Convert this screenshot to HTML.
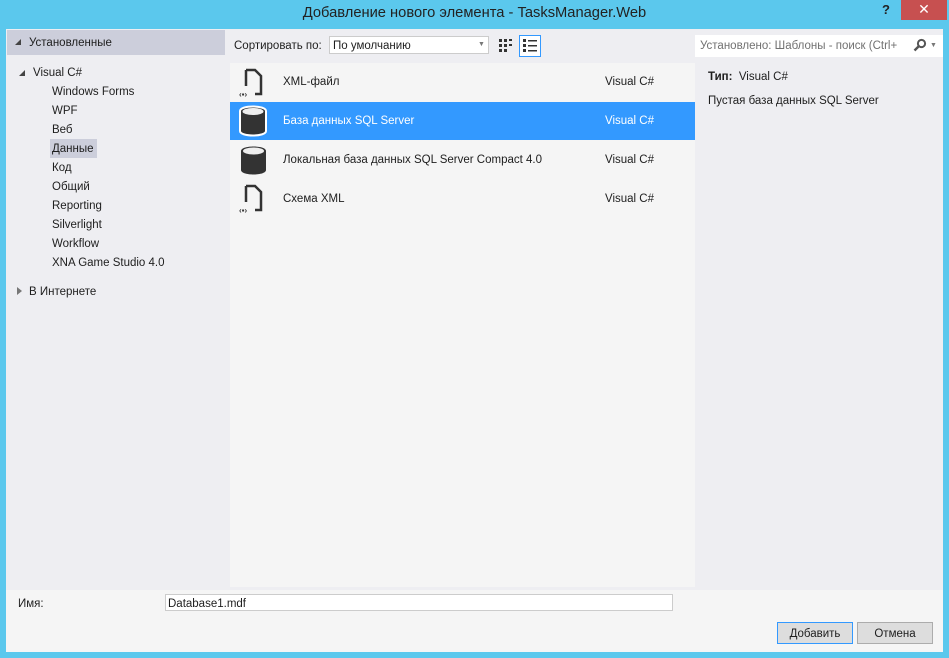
<!DOCTYPE html>
<html><head><meta charset="utf-8"><style>
*{margin:0;padding:0;box-sizing:border-box}
body{width:949px;height:658px;background:#5bc8ed;font-family:"Liberation Sans",sans-serif;font-size:11.5px;color:#1e1e1e;position:relative;overflow:hidden}
.abs{position:absolute}
.t{white-space:nowrap;margin-top:1px}
.tri{position:absolute;width:0;height:0;border-left:6px solid transparent;border-bottom:6px solid #444}
</style></head><body>
<div class="abs t" style="left:0;width:949px;top:4px;text-align:center;font-size:14.7px;color:#222">Добавление нового элемента - TasksManager.Web</div>
<div class="abs t" style="left:882px;top:1px;font-weight:bold;font-size:13px;color:#222">?</div>
<div class="abs" style="left:901px;top:0;width:46px;height:20px;background:#c75050;color:#fff;text-align:center;font-size:14px;line-height:19px">✕</div>
<div class="abs" style="left:6px;top:29px;width:937px;height:623px;background:#f5f5f5"></div>
<div class="abs" style="left:6px;top:29px;width:937px;height:561px;background:#eeeef2"></div>
<!-- left -->
<div class="abs" style="left:7px;top:30px;width:218px;height:25px;background:#cccedb"></div>
<div class="tri" style="left:15px;top:39px"></div>
<div class="abs t" style="left:29px;top:36px">Установленные</div>
<div class="tri" style="left:19px;top:70px"></div>
<div class="abs t" style="left:33px;top:66px">Visual C#</div>
<div class="abs t" style="left:52px;top:85px">Windows Forms</div>
<div class="abs t" style="left:52px;top:104px">WPF</div>
<div class="abs t" style="left:52px;top:123px">Веб</div>
<div class="abs" style="left:50px;top:139px;width:47px;height:19px;background:#cccedb"></div>
<div class="abs t" style="left:52px;top:142px">Данные</div>
<div class="abs t" style="left:52px;top:161px">Код</div>
<div class="abs t" style="left:52px;top:180px">Общий</div>
<div class="abs t" style="left:52px;top:199px">Reporting</div>
<div class="abs t" style="left:52px;top:218px">Silverlight</div>
<div class="abs t" style="left:52px;top:237px">Workflow</div>
<div class="abs t" style="left:52px;top:256px">XNA Game Studio 4.0</div>
<div class="abs" style="left:17px;top:287px;width:0;height:0;border-top:4px solid transparent;border-bottom:4px solid transparent;border-left:5px solid #777"></div>
<div class="abs t" style="left:29px;top:285px">В Интернете</div>
<!-- toolbar -->
<div class="abs t" style="left:234px;top:39px">Сортировать по:</div>
<div class="abs" style="left:329px;top:36px;width:160px;height:18px;background:#fff;border:1px solid #ccc"></div>
<div class="abs t" style="left:333px;top:39px">По умолчанию</div>
<div class="abs t" style="left:478px;top:40px;font-size:7px;color:#777">▼</div>
<svg class="abs" style="left:498px;top:38px" width="16" height="16"><g fill="#333"><rect x="1" y="1" width="3" height="3"/><rect x="6" y="1" width="3" height="3"/><rect x="11" y="1" width="3" height="2"/><rect x="1" y="6" width="3" height="3"/><rect x="6" y="6" width="3" height="3"/><rect x="11" y="6" width="3" height="2"/><rect x="1" y="11" width="3" height="3"/><rect x="6" y="11" width="3" height="3"/></g></svg>
<div class="abs" style="left:519px;top:35px;width:22px;height:22px;border:1px solid #3399ff;background:#fff"></div>
<svg class="abs" style="left:522px;top:38px" width="16" height="16"><g fill="#333"><rect x="1" y="1" width="3" height="3"/><rect x="6" y="2" width="9" height="1.5"/><rect x="1" y="6" width="3" height="3"/><rect x="6" y="7" width="9" height="1.5"/><rect x="1" y="11" width="3" height="3"/><rect x="6" y="12" width="9" height="1.5"/></g></svg>
<!-- list -->
<div class="abs" style="left:230px;top:63px;width:465px;height:524px;background:#f5f5f5"></div>
<div class="abs" style="left:230px;top:102px;width:465px;height:38px;background:#3399ff"></div>
<svg class="abs" style="left:238px;top:68px" width="30" height="30"><path d="M8 2h9l6 6v18h-6" fill="none" stroke="#333" stroke-width="2.5"/><path d="M8 2v16" stroke="#333" stroke-width="2.5"/><text x="1" y="29" font-size="8" font-weight="bold" font-family="Liberation Sans" fill="#333">‹▪›</text></svg>
<div class="abs t" style="left:283px;top:75px">XML-файл</div>
<div class="abs t" style="left:605px;top:75px">Visual C#</div>
<svg class="abs" style="left:238px;top:104px" width="30" height="34"><path d="M2 7c0-6 26-6 26 0v20c0 6-26 6-26 0z" fill="#333" stroke="#fff" stroke-width="2"/><ellipse cx="15" cy="7.5" rx="10.5" ry="3.5" fill="#eee"/></svg>
<div class="abs t" style="left:283px;top:114px;color:#fff">База данных SQL Server</div>
<div class="abs t" style="left:605px;top:114px;color:#fff">Visual C#</div>
<svg class="abs" style="left:240px;top:145px" width="28" height="32"><path d="M1 6c0-6 25-6 25 0v19c0 6-25 6-25 0z" fill="#333"/><ellipse cx="13.5" cy="6" rx="10.5" ry="3.5" fill="#eee"/></svg>
<div class="abs t" style="left:283px;top:153px">Локальная база данных SQL Server Compact 4.0</div>
<div class="abs t" style="left:605px;top:153px">Visual C#</div>
<svg class="abs" style="left:238px;top:184px" width="30" height="30"><path d="M8 2h9l6 6v18h-6" fill="none" stroke="#333" stroke-width="2.5"/><path d="M8 2v16" stroke="#333" stroke-width="2.5"/><text x="1" y="29" font-size="8" font-weight="bold" font-family="Liberation Sans" fill="#333">‹▪›</text></svg>
<div class="abs t" style="left:283px;top:192px">Схема XML</div>
<div class="abs t" style="left:605px;top:192px">Visual C#</div>
<!-- right -->
<div class="abs" style="left:695px;top:35px;width:248px;height:22px;background:#fff"></div>
<div class="abs t" style="left:700px;top:39px;color:#717171">Установлено: Шаблоны - поиск (Ctrl+</div>
<svg class="abs" style="left:913px;top:38px" width="14" height="14"><circle cx="8.5" cy="5.5" r="3.6" fill="none" stroke="#555" stroke-width="2"/><path d="M6 8L1.5 12.5" stroke="#555" stroke-width="2.4"/></svg>
<div class="abs t" style="left:930px;top:41px;font-size:7px;color:#777">▼</div>
<div class="abs t" style="left:708px;top:70px"><b>Тип:</b>&nbsp; Visual C#</div>
<div class="abs t" style="left:708px;top:94px">Пустая база данных SQL Server</div>
<!-- bottom -->
<div class="abs t" style="left:18px;top:597px">Имя:</div>
<div class="abs" style="left:165px;top:594px;width:508px;height:17px;background:#fff;border:1px solid #ccc"></div>
<div class="abs t" style="left:168px;top:597px">Database1.mdf</div>
<div class="abs" style="left:777px;top:622px;width:76px;height:22px;background:#ddd;border:1px solid #3399ff;text-align:center;line-height:22px">Добавить</div>
<div class="abs" style="left:857px;top:622px;width:76px;height:22px;background:#ddd;border:1px solid #acacac;text-align:center;line-height:22px">Отмена</div>
</body></html>
